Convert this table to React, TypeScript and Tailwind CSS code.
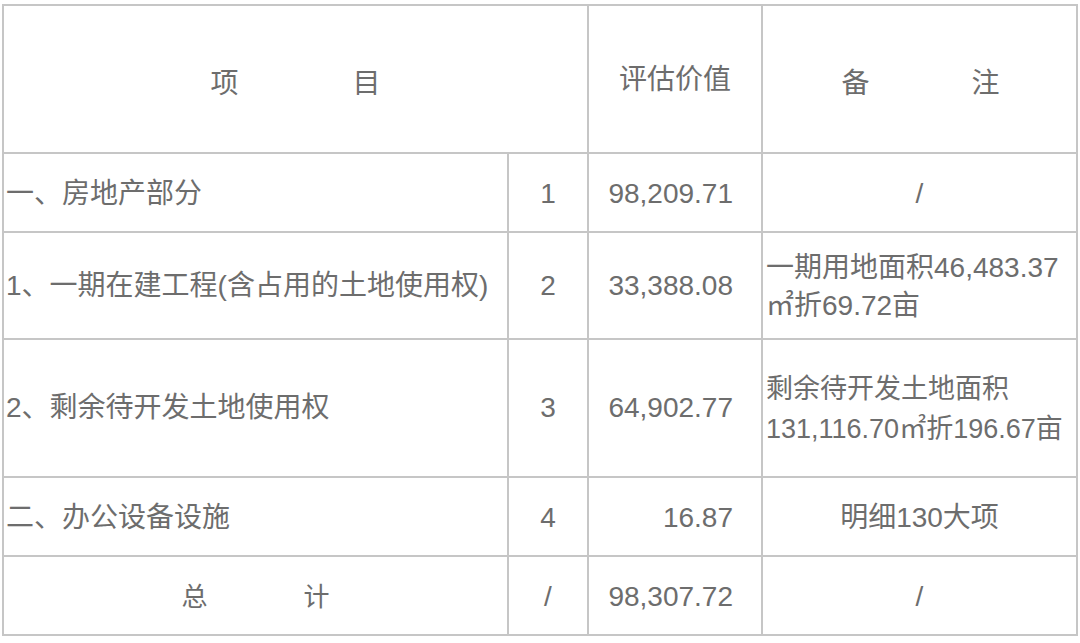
export default function App() {
  const cell = "border-2 border-[#c6c6c6] p-0 align-middle"

  return (
    <main className='min-h-[643px] bg-white pl-[2px] pt-[4px] text-[28px] leading-[38px] text-[#6d6d6d] font-["Liberation_Sans","Noto_Sans_CJK_SC",sans-serif]'>
      <table className="w-[1076px] table-fixed border-collapse">
        <colgroup>
          <col className="w-[505px]" />
          <col className="w-[80px]" />
          <col className="w-[174px]" />
          <col className="w-[315px]" />
        </colgroup>
        <tbody>
          <tr className="h-[148px]">
            <td colSpan={2} className={cell}>
              <div className="flex justify-center gap-[114px] pt-[10px]">
                <span>项</span>
                <span>目</span>
              </div>
            </td>
            <td className={`${cell} text-center`}>
              <div className="pt-[2px]">评估价值</div>
            </td>
            <td className={cell}>
              <div className="flex justify-center gap-[102px] pl-[2px] pt-[10px]">
                <span>备</span>
                <span>注</span>
              </div>
            </td>
          </tr>

          <tr className="h-[79px]">
            <td className={`${cell} pl-[2px] pt-[2px]`}>一、房地产部分</td>
            <td className={`${cell} text-center pt-[2px]`}>1</td>
            <td className={`${cell} pr-[28px] text-right pt-[2px]`}>98,209.71</td>
            <td className={`${cell} text-center pt-[2px]`}>/</td>
          </tr>

          <tr className="h-[107px]">
            <td className={`${cell} pl-[2px]`}>1、一期在建工程(含占用的土地使用权)</td>
            <td className={`${cell} text-center`}>2</td>
            <td className={`${cell} pr-[28px] text-right`}>33,388.08</td>
            <td className={`${cell} whitespace-nowrap pl-[3px] pt-[2px]`}>
              一期用地面积46,483.37
              <br />
              ㎡折69.72亩
            </td>
          </tr>

          <tr className="h-[138px]">
            <td className={`${cell} pl-[2px]`}>2、剩余待开发土地使用权</td>
            <td className={`${cell} text-center`}>3</td>
            <td className={`${cell} pr-[28px] text-right`}>64,902.77</td>
            <td className={`${cell} whitespace-nowrap pl-[3px] pt-[2px] text-[27px] leading-[40px]`}>
              剩余待开发土地面积
              <br />
              131,116.70㎡折196.67亩
            </td>
          </tr>

          <tr className="h-[79px]">
            <td className={`${cell} pl-[2px] pt-[2px]`}>二、办公设备设施</td>
            <td className={`${cell} text-center pt-[2px]`}>4</td>
            <td className={`${cell} pr-[28px] text-right pt-[2px]`}>16.87</td>
            <td className={`${cell} text-center pt-[2px]`}>明细130大项</td>
          </tr>

          <tr className="h-[79px]">
            <td className={cell}>
              <div className="flex justify-center gap-[96px] pt-[2px] text-[26px]">
                <span>总</span>
                <span>计</span>
              </div>
            </td>
            <td className={`${cell} text-center pt-[2px]`}>/</td>
            <td className={`${cell} pr-[28px] text-right pt-[2px]`}>98,307.72</td>
            <td className={`${cell} text-center pt-[2px]`}>/</td>
          </tr>
        </tbody>
      </table>
    </main>
  )
}
